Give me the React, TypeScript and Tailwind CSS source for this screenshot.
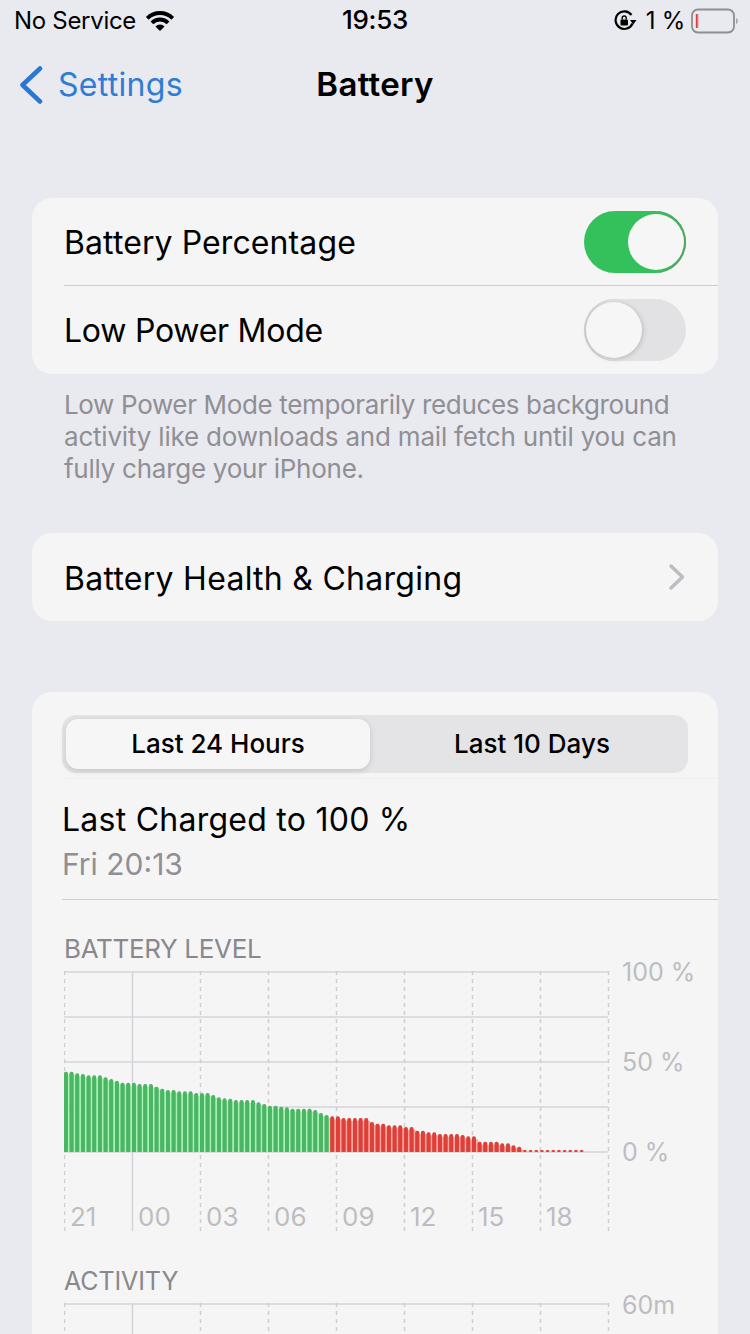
const green = [80.3,80.3,78.7,78,76.7,76.7,76.7,74.7,73,71.3,69.3,69.3,69.3,68,68,68,65.3,63.3,62,62,60.7,60.7,60.7,59,59,59,57,54.7,53.7,53.3,52,52,52,52,49.7,48,46.3,46.3,45.3,44.7,43.3,43.3,43.3,43.3,42,39,37];
const red = [35.7,35.7,34,34,34,34,34,30,28.3,28.3,26.7,26.7,26.7,25,25,21.3,21.3,19.7,19.7,18,18,18,18,17,15.7,15.7,10.3,10.3,10.3,10.3,8.7,8.7,6.7,5.3,2,2,2,2,2,2,2,2,2,2,2];
const gridX = [0, 68, 136, 204, 272, 340, 408, 476, 544];

function Switch({ on }: { on: boolean }) {
  return on ? (
    <div className="flex h-[62px] w-[102px] items-center justify-end rounded-full bg-[#34c05a] pr-[2px] shadow-[inset_-3px_0_0_#4da862]">
      <div className="h-[56px] w-[56px] rounded-full bg-[#f6f6f6]" />
    </div>
  ) : (
    <div className="flex h-[62px] w-[102px] items-center rounded-full bg-[#e2e2e4] pl-[2px] shadow-[inset_2px_0_0_#d2d2d6]">
      <div className="h-[56px] w-[56px] rounded-full bg-[#f6f6f6] shadow-[1px_1px_5px_rgba(0,0,0,0.18)]" />
    </div>
  );
}

function Grid({ height, rows, solid }: { height: number; rows: number[]; solid: number }) {
  return (
    <>
      {rows.map((y) => (
        <line key={y} x1="0" x2="544" y1={y + 1} y2={y + 1} stroke="#d3d3da" strokeWidth="1.5" />
      ))}
      {gridX.map((x) => (
        <line
          key={x}
          x1={x + 0.5}
          x2={x + 0.5}
          y1="0"
          y2={height}
          stroke={x === solid ? "#d3d3da" : "#cfcfd3"}
          strokeWidth="1.5"
          strokeDasharray={x === solid ? undefined : "4 4"}
        />
      ))}
    </>
  );
}

function Bars() {
  const base = 181;
  const all = [...green.map((h) => ({ h, g: true })), ...red.map((h) => ({ h, g: false }))];
  return (
    <>
      {all.map((b, i) => {
        const x = i * 5.667;
        const dark = b.g ? "#4cb564" : "#dd3f39";
        const light = b.g ? "#a4f2b4" : "#fda49c";
        return (
          <g key={i}>
            {b.h > 3 && <rect x={x + 3.6} y={base - b.h + 3} width="2.2" height={b.h - 3} fill={light} />}
            <rect x={x} y={base - b.h} width="3.8" height={b.h} rx="1.6" fill={dark} />
            {b.h > 3 && <rect x={x} y={base - b.h + 2} width="3.8" height={b.h - 2} fill={dark} />}
          </g>
        );
      })}
    </>
  );
}

function Chart() {
  return (
    <div className="relative h-[260px] w-[544px]">
      <svg className="absolute left-0 top-0" width="546" height="260" viewBox="0 0 546 260">
        <Grid height={260} rows={[0, 45, 90, 135, 180]} solid={68} />
        <Bars />
      </svg>
      <div className="absolute bottom-0 left-0 grid h-[29px] w-[544px] grid-cols-8 items-center text-[26px] leading-[29px] text-[#bdbdc1]">
        {["21", "00", "03", "06", "09", "12", "15", "18"].map((l) => (
          <span key={l} className="pl-[6px]">{l}</span>
        ))}
      </div>
    </div>
  );
}

export default function App() {
  return (
    <div className="h-[1334px] w-[750px] overflow-hidden bg-[#e9e9f0] font-['Inter','Liberation_Sans',sans-serif] text-black">
      <div className="relative flex h-[42px] items-center justify-between pl-[14px] pr-[12px] text-[24px] tracking-[-0.3px]">
        <div className="flex items-center gap-[9px]">
          <span className="font-normal">No Service</span>
          <svg width="30" height="22" viewBox="0 0 30 22" fill="none">
            <path d="M2.300 8.300A18 18 0 0 1 27.700 8.300" stroke="#000" strokeWidth="4" />
            <path d="M6.900 12.900A11.500 11.500 0 0 1 23.100 12.900" stroke="#000" strokeWidth="4" />
            <path d="M15 21 10.400 16.400A6.500 6.500 0 0 1 19.600 16.400Z" fill="#000" />
          </svg>
        </div>
        <span className="absolute left-0 right-0 top-[4px] text-center text-[26px] font-medium leading-[32px]">19:53</span>
        <div className="flex items-center gap-[8px]">
          <svg width="24" height="22" viewBox="0 0 24 22" fill="none">
            <path d="M18.500 13.500A8.800 8.800 0 1 1 17.500 5" stroke="#000" strokeWidth="2.200" />
            <path d="M16 10h6.500l-3.200 4.500z" fill="#000" />
            <rect x="6.500" y="9.500" width="7.500" height="6" rx="1" fill="#000" />
            <path d="M8.200 9.500V8a2 2 0 0 1 4 0v1.500" stroke="#000" strokeWidth="1.400" />
          </svg>
          <span>1 %</span>
          <svg width="47" height="26" viewBox="0 0 47 26" fill="none" className="-ml-[2px]">
            <rect x="1" y="1.500" width="42" height="23" rx="6" stroke="#8e8e93" strokeWidth="1.800" />
            <rect x="4.500" y="6" width="3.200" height="14" rx="1" fill="#eba9a9" />
            <rect x="5" y="6" width="1.500" height="14" fill="#d6423f" />
            <path d="M45 10c1.200.5 1.800 1.700 1.800 3s-.6 2.500-1.800 3z" fill="#a5a5a9" />
          </svg>
        </div>
      </div>

      <div className="relative flex h-[86px] items-center pl-[18px] text-[32px]">
        <svg width="26" height="38" viewBox="0 0 26 38" fill="none" className="mr-[14px]">
          <path d="M22 2.500 4.500 19 22 35.500" stroke="#2a78d6" strokeWidth="4.500" strokeLinecap="round" strokeLinejoin="round" />
        </svg>
        <span className="tracking-[0.3px] text-[#2f7dd3]">Settings</span>
        <span className="absolute left-0 right-0 text-center text-[33px] font-semibold tracking-[0.3px]">Battery</span>
      </div>

      <div className="mx-[32px] mt-[70px] rounded-[20px] bg-[#f5f5f6] text-[32px]">
        <div className="flex h-[87px] items-center justify-between pl-[32px] pr-[32px]">
          <span className="pt-[2px] tracking-[0.1px]">Battery Percentage</span>
          <Switch on />
        </div>
        <div className="ml-[32px] h-px bg-[#cbcbdc]" />
        <div className="flex h-[88px] items-center justify-between pl-[32px] pr-[32px]">
          <span className="pt-[2px] tracking-[-0.25px]">Low Power Mode</span>
          <Switch on={false} />
        </div>
      </div>
      <p className="mx-[64px] mt-[15px] text-[26px] leading-[32px] text-[#8f8f94]">
        <span className="block tracking-[-0.35px]">Low Power Mode temporarily reduces background</span>
        <span className="block tracking-[-0.2px]">activity like downloads and mail fetch until you can</span>
        <span className="block tracking-[-0.26px]">fully charge your iPhone.</span>
      </p>

      <div className="mx-[32px] mt-[48px] flex h-[88px] items-center justify-between rounded-[20px] bg-[#f5f5f6] pl-[32px] pr-[32px] text-[32px]">
        <span className="pt-[4px] tracking-[0.27px]">Battery Health & Charging</span>
        <svg width="18" height="28" viewBox="0 0 18 28" fill="none">
          <path d="M3 3 14.500 14 3 25" stroke="#bcbcc2" strokeWidth="3.500" strokeLinecap="round" strokeLinejoin="round" />
        </svg>
      </div>

      <div className="mx-[32px] mt-[71px] h-[700px] rounded-t-[20px] bg-[#f5f5f6] pt-[23px]">
        <div className="ml-[30px] flex h-[58px] w-[626px] items-center rounded-[14px] bg-[#e4e4e6] pl-[4px] text-[26px] font-medium">
          <div className="flex h-[50px] w-[304px] items-center justify-center rounded-[12px] bg-[#f6f6f6] pb-[1px] shadow-[0_2px_6px_rgba(0,0,0,0.14)]">Last 24 Hours</div>
          <div className="flex h-[50px] flex-1 items-center justify-center pb-[1px] pl-[6px]">Last 10 Days</div>
        </div>
        <div className="ml-[30px] mt-[5px] h-px bg-[#eeeeef]" />
        <div className="ml-[30px] mt-[20px] text-[32px] leading-[42px] tracking-[0.25px]">Last Charged to 100 %</div>
        <div className="ml-[30px] mt-[3px] text-[30px] leading-[40px] text-[#8f8f94]">Fri 20:13</div>
        <div className="ml-[30px] mt-[15px] h-px bg-[#cbcbdc]" />

        <div className="ml-[32px] mt-[33px] text-[26px] leading-[32px] tracking-[-0.33px] text-[#88888d]">BATTERY LEVEL</div>
        <div className="ml-[32px] mt-[6px] flex">
          <Chart />
          <div className="ml-[14px] flex h-[214px] -translate-y-[16px] flex-col justify-between text-[25px] leading-[34px] text-[#bdbdc1]">
            <span>100 %</span>
            <span>50 %</span>
            <span>0 %</span>
          </div>
        </div>

        <div className="ml-[32px] mt-[34px] text-[25px] leading-[32px] tracking-[-0.1px] text-[#88888d]">ACTIVITY</div>
        <div className="ml-[32px] mt-[6px] flex">
          <div className="h-[40px] w-[544px]">
            <svg width="546" height="40" viewBox="0 0 546 40">
              <Grid height={40} rows={[0]} solid={68} />
            </svg>
          </div>
          <span className="ml-[14px] -translate-y-[15px] text-[25px] leading-[34px] text-[#bdbdc1]">60m</span>
        </div>
      </div>
    </div>
  );
}
